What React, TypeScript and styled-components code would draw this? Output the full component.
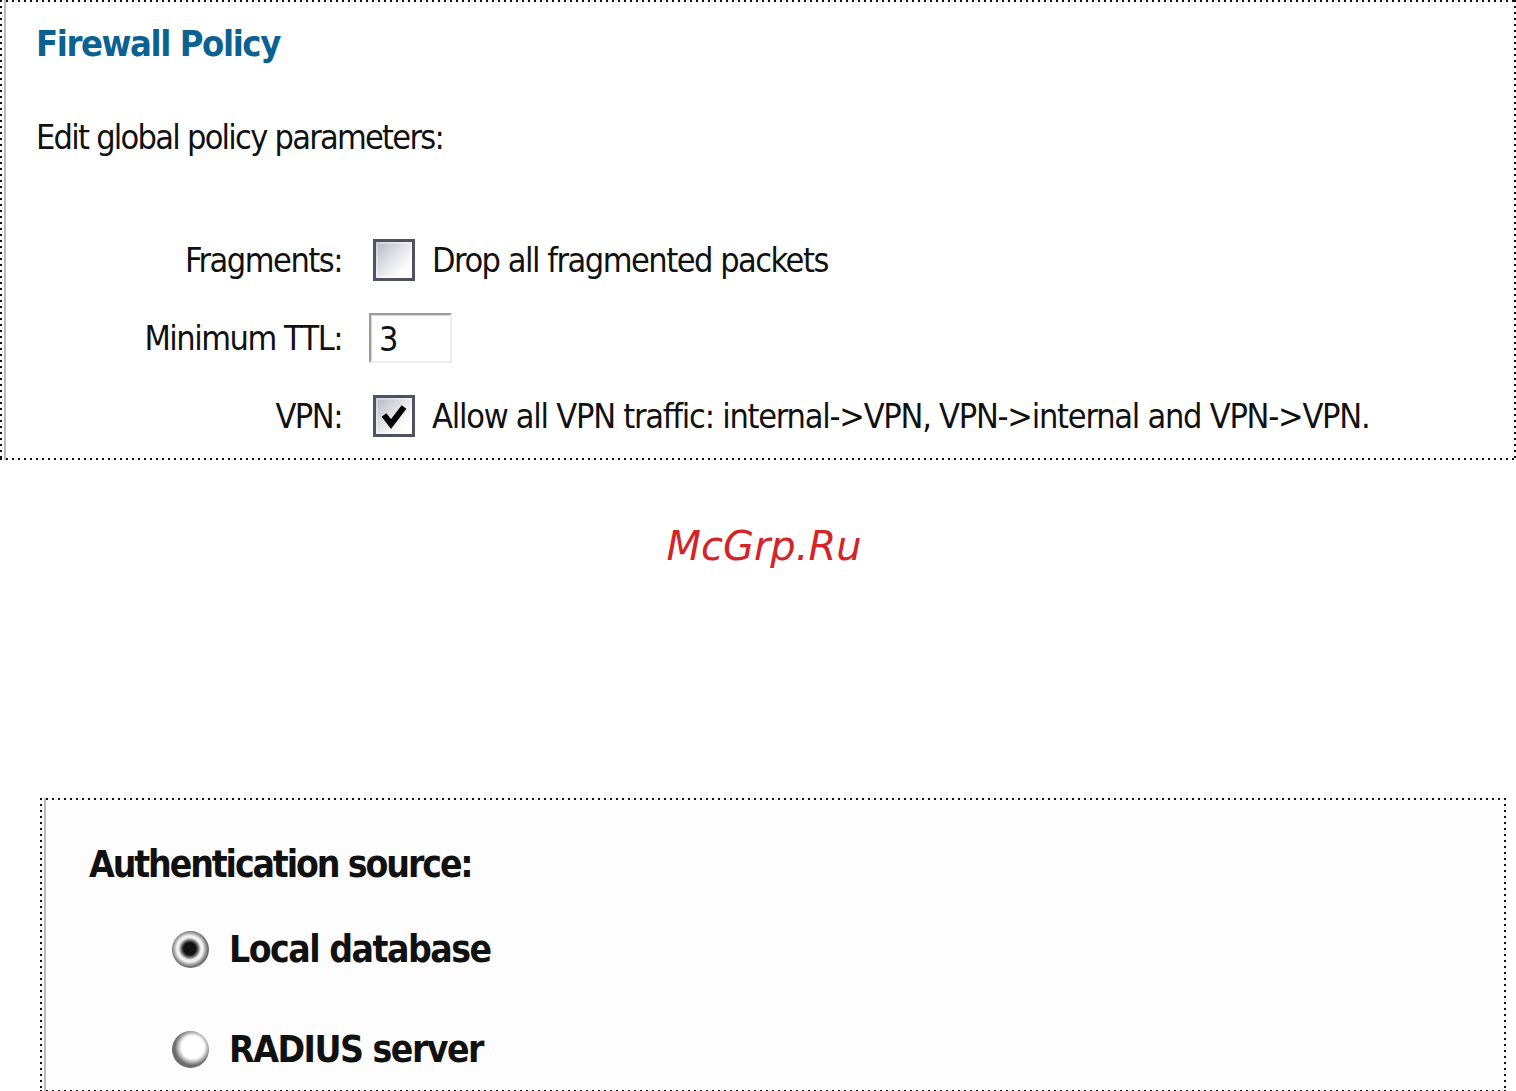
import React from "react";
import styled, { createGlobalStyle, css } from "styled-components";

const winFont = `"DejaVu Sans Condensed", "Liberation Sans", sans-serif`;

const GlobalStyle = createGlobalStyle`
  html, body {
    margin: 0;
    padding: 0;
    background: #ffffff;
  }
  * {
    box-sizing: border-box;
  }
`;

const dotted = css`
  background-image:
    linear-gradient(to right, #111 2px, transparent 2px),
    linear-gradient(to right, #111 2px, transparent 2px),
    linear-gradient(to bottom, #111 2px, transparent 2px),
    linear-gradient(to bottom, #111 2px, transparent 2px),
    linear-gradient(to right, #b9b9b9, #b9b9b9);
  background-size: 6px 2px, 6px 2px, 2px 6px, 2px 6px, 2px 100%;
  background-position: 0 0, 0 100%, 0 0, 100% 0, 4px 0;
  background-repeat: repeat-x, repeat-x, repeat-y, repeat-y, no-repeat;
`;

const Page = styled.div`
  width: 1516px;
  height: 1091px;
  overflow: hidden;
  font-family: ${winFont};
  color: #111;
`;

const Panel = styled.section<{ $left?: number; $top?: number; $width: number; $height: number; $tint?: string }>`
  ${dotted};
  background-color: ${(p) => p.$tint ?? "#ffffff"};
  margin-left: ${(p) => p.$left ?? 0}px;
  margin-top: ${(p) => p.$top ?? 0}px;
  width: ${(p) => p.$width}px;
  height: ${(p) => p.$height}px;
`;

const PolicyBody = styled.div`
  padding: 20px 0 0 36px;
`;

const Title = styled.h1`
  margin: 0;
  font-family: ${winFont};
  font-size: 36px;
  line-height: 48px;
  font-weight: 700;
  letter-spacing: -1.4px;
  color: #0b6292;
`;

const regularText = css`
  font-size: 34px;
  line-height: 44px;
  letter-spacing: -1.5px;
`;

const Intro = styled.p`
  margin: 47px 0 0;
  ${regularText};
  letter-spacing: -1.75px;
`;

const FieldGrid = styled.div`
  margin-top: 62px;
  display: grid;
  grid-template-columns: 306px auto;
  grid-auto-rows: 78px;
  column-gap: 27px;
  align-items: center;
`;

const FieldLabel = styled.div`
  text-align: right;
  ${regularText};
`;

const FieldControl = styled.div`
  display: flex;
  align-items: center;
  gap: 17px;
  white-space: nowrap;
  ${regularText};
`;

const LongText = styled.span`
  letter-spacing: -1.25px;
`;

const CheckBox = styled.span`
  display: inline-flex;
  align-items: center;
  justify-content: center;
  width: 42px;
  height: 42px;
  margin-left: 4px;
  border: 3px solid #4f5361;
  background: linear-gradient(135deg, #b4b6c0 0%, #e2e3e8 45%, #ffffff 80%);
  box-shadow: inset 0 0 0 2px rgba(255, 255, 255, 0.35);
`;

const TextBox = styled.div`
  width: 83px;
  height: 50px;
  padding: 2px 0 0 8px;
  border-style: solid;
  border-width: 2px;
  border-color: #9c9c9c #ececec #ececec #9c9c9c;
  box-shadow: inset 1px 1px 0 #d8d8d8;
  background: #fff;
  ${regularText};
`;

const Watermark = styled.div`
  margin-top: 62px;
  padding-left: 12px;
  text-align: center;
  font-family: "DejaVu Sans", sans-serif;
  font-style: oblique;
  font-size: 40px;
  line-height: 48px;
  color: #d52327;
`;

const AuthBody = styled.div`
  padding: 43px 0 0 49px;
`;

const boldText = css`
  font-size: 37px;
  line-height: 48px;
  font-weight: 700;
  letter-spacing: -1.5px;
`;

const AuthHeading = styled.h2`
  margin: 0;
  font-family: ${winFont};
  ${boldText};
  letter-spacing: -2.1px;
`;

const RadioList = styled.div`
  margin-top: 37px;
  padding-left: 83px;
  display: grid;
  grid-auto-rows: 100px;
`;

const RadioRow = styled.label`
  display: flex;
  align-items: flex-start;
  gap: 20px;
  ${boldText};
`;

const RadioDot = styled.span<{ $on?: boolean }>`
  flex: none;
  width: 37px;
  height: 37px;
  margin-top: 5px;
  border-radius: 50%;
  background: ${(p) =>
    p.$on
      ? "radial-gradient(circle at 48% 48%, #111 0 6px, #555 8px, #e9e9e9 11px, #f4f4f4 13px, #bdbdbd 15px, #6f6f6f 18px)"
      : "radial-gradient(circle at 56% 44%, #ffffff 0 11px, #f2f2f2 12px, #c8c8c8 14px, #6c6c6c 18px)"};
`;

function Check() {
  return (
    <svg width="30" height="30" viewBox="0 0 30 30" aria-hidden="true">
      <path d="M5 14 L12 23 L25 6" fill="none" stroke="#000" strokeWidth="6" strokeLinejoin="miter" />
    </svg>
  );
}

export default function App() {
  return (
    <Page>
      <GlobalStyle />
      <Panel $width={1516} $height={460}>
        <PolicyBody>
          <Title>Firewall Policy</Title>
          <Intro>Edit global policy parameters:</Intro>
          <FieldGrid>
            <FieldLabel>Fragments:</FieldLabel>
            <FieldControl>
              <CheckBox />
              <span>Drop all fragmented packets</span>
            </FieldControl>
            <FieldLabel>Minimum TTL:</FieldLabel>
            <FieldControl>
              <TextBox>3</TextBox>
            </FieldControl>
            <FieldLabel>VPN:</FieldLabel>
            <FieldControl>
              <CheckBox>
                <Check />
              </CheckBox>
              <LongText>Allow all VPN traffic: internal-&gt;VPN, VPN-&gt;internal and VPN-&gt;VPN.</LongText>
            </FieldControl>
          </FieldGrid>
        </PolicyBody>
      </Panel>

      <Watermark>McGrp.Ru</Watermark>

      <Panel $left={40} $top={228} $width={1466} $height={294} $tint="#fdfdfd">
        <AuthBody>
          <AuthHeading>Authentication source:</AuthHeading>
          <RadioList>
            <RadioRow>
              <RadioDot $on />
              Local database
            </RadioRow>
            <RadioRow>
              <RadioDot />
              RADIUS server
            </RadioRow>
          </RadioList>
        </AuthBody>
      </Panel>
    </Page>
  );
}
